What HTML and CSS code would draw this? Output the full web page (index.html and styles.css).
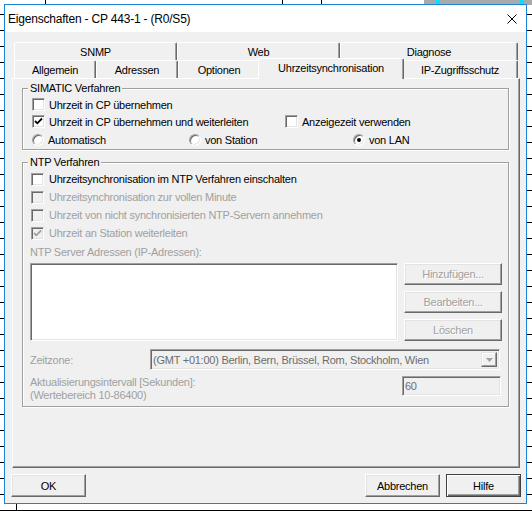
FILE: index.html
```html
<!DOCTYPE html>
<html lang="de">
<head>
<meta charset="utf-8">
<title>Eigenschaften - CP 443-1</title>
<link rel="stylesheet" href="styles.css">
</head>
<body>
<div class="desktop">
  <div class="bgline bl1"></div>
  <div class="bgline bl2"></div>
  <div class="bgline bl3"></div>
  <div class="bgline bl4"></div>
  <div class="bgtool"><span class="cy c1"></span><span class="cy c2"></span></div>

  <div class="window">
    <div class="titlebar">
      <span class="title">Eigenschaften - CP 443-1 - (R0/S5)</span>
      <span class="close"><svg width="10" height="10" viewBox="0 0 10 10"><path d="M0.5 0.5 L9.5 9.5 M9.5 0.5 L0.5 9.5" stroke="#000" stroke-width="1" fill="none"/></svg></span>
    </div>
    <div class="client">
      <div class="tabs">
        <div class="tabrow">
          <div class="tab t-snmp">SNMP</div>
          <div class="tab t-web">Web</div>
          <div class="tab t-diag">Diagnose</div>
        </div>
        <div class="tabrow">
          <div class="tab t-allg">Allgemein</div>
          <div class="tab t-adr">Adressen</div>
          <div class="tab t-opt">Optionen</div>
          <div class="tab sel">Uhrzeitsynchronisation</div>
          <div class="tab t-ip">IP-Zugriffsschutz</div>
        </div>
      </div>

      <div class="panel">
        <div class="group g1">
          <span class="glabel">SIMATIC Verfahren</span>
          <div class="row r17">
            <div class="check"><span class="box"></span><span>Uhrzeit in CP übernehmen</span></div>
          </div>
          <div class="row r17">
            <div class="check w253"><span class="box"><svg width="9" height="9" viewBox="0 0 9 9"><path d="M1 4 L3.3 6.3 L8 1.5" stroke="#000" stroke-width="1.8" fill="none"/></svg></span><span>Uhrzeit in CP übernehmen und weiterleiten</span></div>
            <div class="check"><span class="box"></span><span>Anzeigezeit verwenden</span></div>
          </div>
          <div class="row r19">
            <div class="radio w157"><span class="rb"></span><span>Automatisch</span></div>
            <div class="radio w164"><span class="rb"></span><span>von Station</span></div>
            <div class="radio"><span class="rb on"></span><span>von LAN</span></div>
          </div>
        </div>

        <div class="group g2">
          <span class="glabel">NTP Verfahren</span>
          <div class="row r18 ind">
            <div class="check"><span class="box"></span><span>Uhrzeitsynchronisation im NTP Verfahren einschalten</span></div>
          </div>
          <div class="row r18 ind dis">
            <div class="check"><span class="box off"></span><span>Uhrzeitsynchronisation zur vollen Minute</span></div>
          </div>
          <div class="row r18 ind dis">
            <div class="check"><span class="box off"></span><span>Uhrzeit von nicht synchronisierten NTP-Servern annehmen</span></div>
          </div>
          <div class="row r18 ind dis">
            <div class="check"><span class="box off"><svg width="9" height="9" viewBox="0 0 9 9"><path d="M1 4 L3.3 6.3 L8 1.5" stroke="#a0a0a0" stroke-width="1.8" fill="none"/></svg></span><span>Uhrzeit an Station weiterleiten</span></div>
          </div>
          <div class="ntplabel dis">NTP Server Adressen (IP-Adressen):</div>
          <div class="listrow">
            <div class="listbox"></div>
            <div class="btncol">
              <div class="btn sm dis">Hinzufügen...</div>
              <div class="btn sm dis">Bearbeiten...</div>
              <div class="btn sm dis">Löschen</div>
            </div>
          </div>
          <div class="tzrow">
            <span class="tzlabel dis">Zeitzone:</span>
            <div class="combo">
              <span class="combotext">(GMT +01:00) Berlin, Bern, Brüssel, Rom, Stockholm, Wien</span>
              <span class="dropbtn"><svg width="7" height="4" viewBox="0 0 7 4"><path d="M0 0 H7 L3.5 4 Z" fill="#a0a0a0"/></svg></span>
            </div>
          </div>
          <div class="introw">
            <span class="intlabel dis">Aktualisierungsintervall [Sekunden]:<br>(Wertebereich 10-86400)</span>
            <div class="edit">60</div>
          </div>
        </div>
      </div>

      <div class="footer">
        <div class="btn big">OK</div>
        <div class="btn big push">Abbrechen</div>
        <div class="btn big def">Hilfe</div>
      </div>
    </div>
  </div>
</div>
</body>
</html>
```

FILE: styles.css
```css
* { box-sizing: border-box; }
html, body { margin: 0; padding: 0; }
body {
  width: 532px;
  height: 511px;
  overflow: hidden;
  background: #fff;
  font-family: "Liberation Sans", Arial, sans-serif;
  font-size: 11px;
  letter-spacing: -0.25px;
  color: #000;
}
.desktop {
  position: relative;
  width: 532px;
  height: 511px;
  background: repeating-linear-gradient(to bottom, transparent 0 14px, #000 14px 15px, transparent 15px 16px);
}
.bgline { position: absolute; width: 1px; background: #000; }
.bl1 { left: 45px; top: 0; height: 5px; }
.bl2 { left: 282px; top: 0; height: 5px; }
.bl3 { left: 321px; top: 0; height: 5px; }
.bl4 { left: 16px; top: 504px; height: 7px; }
.bgtool { position: absolute; left: 424px; top: 0; width: 108px; height: 5px; background: #a9a9a9; }
.cy { position: absolute; top: 0; width: 4px; height: 4px; background: #00e0ff; }
.c1 { left: 12px; }
.c2 { left: 96px; }

.window {
  position: absolute;
  left: 4px;
  top: 4px;
  width: 523px;
  height: 500px;
  border: 1px solid #1883d7;
  background: #f0f0f0;
  display: flex;
  flex-direction: column;
}
.titlebar {
  height: 27px;
  flex: none;
  background: #fff;
  display: flex;
  align-items: center;
  justify-content: space-between;
}
.title { padding-left: 3px; font-size: 12px; letter-spacing: -0.2px; padding-top: 1px; }
.close { width: 28px; height: 27px; display: flex; align-items: center; justify-content: center; }

.client { flex: 1; padding: 10px 6px 0 7px; display: flex; flex-direction: column; }

.tabs { margin-left: 2px; width: 504px; }
.tabrow { display: flex; height: 18px; }
.tab {
  height: 18px;
  border-top: 1px solid #fff;
  border-left: 1px solid #fff;
  border-right: 1px solid #696969;
  box-shadow: inset -1px 0 0 #a0a0a0;
  border-radius: 2px 2px 0 0;
  background: #f0f0f0;
  display: flex;
  align-items: center;
  justify-content: center;
  white-space: nowrap;
}
.t-snmp { width: 163px; }
.t-web { width: 163px; }
.t-diag { width: 178px; }
.t-allg { width: 82px; }
.t-adr { width: 82px; }
.t-opt { width: 82px; }
.t-ip { width: 116px; }
.tab.sel {
  width: 146px;
  height: 21px;
  margin: -2px -2px -1px;
  padding-bottom: 3px;
  position: relative;
  z-index: 1;
}

.panel {
  width: 508px;
  height: 390px;
  border-top: 1px solid #fff;
  border-left: 1px solid #fff;
  border-right: 1px solid #696969;
  border-bottom: 1px solid #696969;
  box-shadow: inset -1px -1px 0 #a0a0a0;
  padding: 9px 0 0 9px;
}

.group {
  position: relative;
  width: 487px;
  border: 1px solid #a0a0a0;
  box-shadow: 1px 1px 0 #fff, inset 1px 1px 0 #fff;
}
.glabel {
  position: absolute;
  top: -7px;
  left: 5px;
  padding: 0 2px;
  line-height: 13px;
  background: #f0f0f0;
  white-space: nowrap;
}
.g1 { height: 62px; padding: 7px 0 0 9px; }
.g2 { height: 245px; margin-top: 12px; padding: 7px 0 0 7px; }

.row { display: flex; align-items: center; white-space: nowrap; }
.r17 { height: 17px; }
.r18 { height: 18px; }
.r19 { height: 19px; }
.ind { padding-left: 1px; }
.check, .radio { display: flex; align-items: center; }
.w253 { width: 253px; }
.w157 { width: 157px; }
.w164 { width: 164px; }

.box {
  width: 13px;
  height: 13px;
  margin-right: 4px;
  background: #fff;
  border-style: solid;
  border-width: 1px;
  border-color: #a0a0a0 #fff #fff #a0a0a0;
  box-shadow: inset 1px 1px 0 #696969, inset -1px -1px 0 #e3e3e3;
  display: flex;
  align-items: center;
  justify-content: center;
}
.g2 .box { margin-right: 5px; }
.box.off { background: #f0f0f0; }
.rb {
  width: 12px;
  height: 12px;
  margin-right: 4px;
  border-radius: 50%;
  background: #fff;
  border-style: solid;
  border-width: 1px;
  border-color: #a0a0a0 #fff #fff #a0a0a0;
  box-shadow: inset 1px 1px 0 #696969, inset -1px -1px 0 #e3e3e3;
  display: flex;
  align-items: center;
  justify-content: center;
}
.rb.on::after {
  content: "";
  width: 4px;
  height: 4px;
  border-radius: 50%;
  background: #000;
}

.dis { color: #a0a0a0; }

.ntplabel { margin-top: 4px; line-height: 13px; }
.listrow { display: flex; margin-top: 4px; }
.listbox {
  width: 368px;
  height: 78px;
  background: #fff;
  border-style: solid;
  border-width: 1px;
  border-color: #a0a0a0 #fff #fff #a0a0a0;
  box-shadow: inset 1px 1px 0 #696969, inset -1px -1px 0 #e3e3e3;
}
.btncol { margin-left: 6px; display: flex; flex-direction: column; gap: 6px; }

.btn {
  display: flex;
  align-items: center;
  justify-content: center;
  background: #f0f0f0;
  border-style: solid;
  border-width: 1px;
  border-color: #fff #696969 #696969 #fff;
  box-shadow: inset -1px -1px 0 #a0a0a0, inset 1px 1px 0 #e3e3e3;
  white-space: nowrap;
}
.btn.sm { width: 98px; height: 22px; }
.btn.dis { color: #a0a0a0; text-shadow: 1px 1px 0 #fff; }
.btn.big { width: 75px; height: 23px; }
.btn.push { margin-left: auto; }
.btn.def {
  margin-left: 6px;
  border: 1px solid #404040;
  box-shadow: inset 1px 1px 0 #fff, inset -1px -1px 0 #696969, inset -2px -2px 0 #a0a0a0;
}

.tzrow { display: flex; align-items: center; margin-top: 8px; height: 21px; }
.tzlabel { width: 120px; }
.combo {
  width: 350px;
  height: 21px;
  display: flex;
  align-items: center;
  border-style: solid;
  border-width: 1px;
  border-color: #a0a0a0 #fff #fff #a0a0a0;
  box-shadow: inset 1px 1px 0 #696969, inset -1px -1px 0 #e3e3e3;
  padding: 0 2px 0 2px;
  white-space: nowrap;
}
.combotext { color: #6d6d6d; flex: 1; }
.dropbtn {
  width: 16px;
  height: 15px;
  display: flex;
  align-items: center;
  justify-content: center;
  border-style: solid;
  border-width: 1px;
  border-color: #e3e3e3 #696969 #696969 #e3e3e3;
  box-shadow: inset -1px -1px 0 #a0a0a0, inset 1px 1px 0 #fff;
}

.introw { display: flex; margin-top: 6px; }
.intlabel { width: 372px; line-height: 13px; }
.edit {
  width: 99px;
  height: 20px;
  line-height: 18px;
  padding-left: 2px;
  color: #6d6d6d;
  border-style: solid;
  border-width: 1px;
  border-color: #a0a0a0 #fff #fff #a0a0a0;
  box-shadow: inset 1px 1px 0 #696969, inset -1px -1px 0 #e3e3e3;
}

.footer { display: flex; margin: 6px -1px 0; }
```
